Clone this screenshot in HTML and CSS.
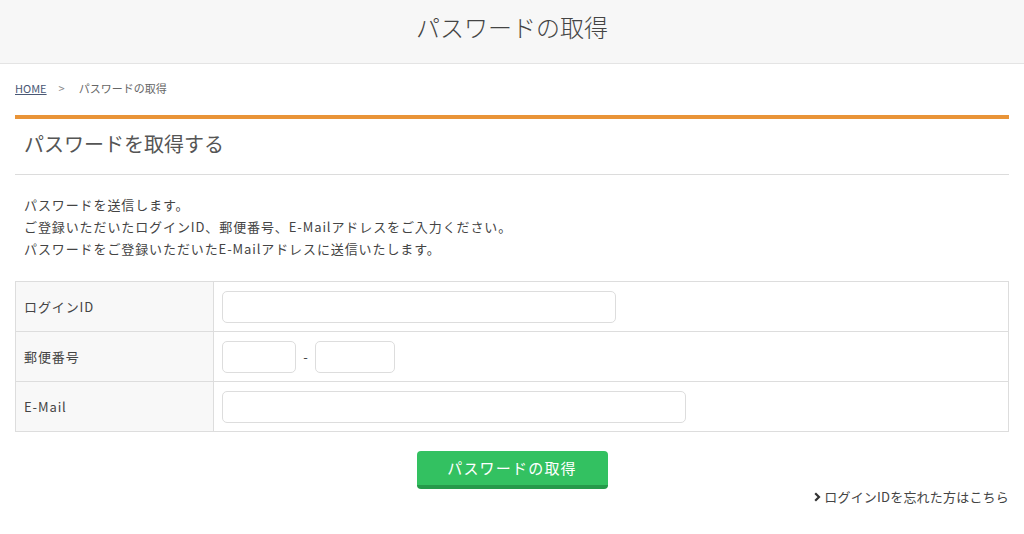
FILE: index.html
```html
<!DOCTYPE html>
<html lang="ja">
<head>
<meta charset="utf-8">
<title>パスワードの取得</title>
<link rel="stylesheet" href="styles.css">
</head>
<body>
<header class="site-header">
  <h1 class="page-title">パスワードの取得</h1>
</header>
<main class="container">
  <nav class="breadcrumb">
    <a href="#" class="crumb-link">HOME</a>
    <span class="crumb-sep">&gt;</span>
    <span class="crumb-current">パスワードの取得</span>
  </nav>
  <section class="panel">
    <h2 class="panel-title">パスワードを取得する</h2>
    <div class="intro">
      <p>パスワードを送信します。</p>
      <p>ご登録いただいたログインID、郵便番号、E-Mailアドレスをご入力ください。</p>
      <p>パスワードをご登録いただいたE-Mailアドレスに送信いたします。</p>
    </div>
    <div class="form-table">
      <div class="row">
        <div class="label">ログインID</div>
        <div class="field"><input class="input input-id" type="text"></div>
      </div>
      <div class="row">
        <div class="label">郵便番号</div>
        <div class="field">
          <input class="input input-zip1" type="text">
          <span class="dash">-</span>
          <input class="input input-zip2" type="text">
        </div>
      </div>
      <div class="row">
        <div class="label">E-Mail</div>
        <div class="field"><input class="input input-mail" type="text"></div>
      </div>
    </div>
    <div class="actions">
      <button class="btn-submit" type="button">パスワードの取得</button>
    </div>
    <div class="links">
      <a href="#" class="forgot-link"><svg class="chev" width="7" height="10" viewBox="0 0 7 10"><path d="M1.2 1.2 L5 5 L1.2 8.8" fill="none" stroke="#333" stroke-width="2.2"/></svg>ログインIDを忘れた方はこちら</a>
    </div>
  </section>
</main>
</body>
</html>
```

FILE: styles.css
```css
* { box-sizing: border-box; }
html, body { margin: 0; padding: 0; background: #fff; }
body {
  font-family: "Noto Sans CJK JP", "Noto Sans", sans-serif;
  color: #444;
}
p { margin: 0; }

.site-header {
  height: 64px;
  background: #f7f7f7;
  border-bottom: 1px solid #e4e4e4;
  display: flex;
  align-items: center;
  justify-content: center;
}
.page-title {
  margin: 0 0 10px;
  font-size: 24px;
  font-weight: 300;
  color: #444;
  line-height: 32px;
}

.container { padding: 0 15px; }

.breadcrumb {
  height: 51px;
  padding-top: 16px;
  font-size: 11px;
  line-height: 16px;
  color: #666;
  display: flex;
  gap: 0;
}
.crumb-link { color: #4a5875; text-decoration: underline; }
.crumb-sep { margin: 0 14px 0 12px; color: #888; }
.crumb-current { color: #666; }

.panel {
  border-top: 4px solid #e99438;
}
.panel-title {
  margin: 0;
  padding: 0 9px;
  height: 56px;
  line-height: 50px;
  font-size: 20px;
  font-weight: 400;
  color: #555;
  border-bottom: 1px solid #dcdcdc;
}
.intro {
  padding: 19px 9px 0;
  height: 106px;
  font-size: 13px;
  line-height: 22px;
  letter-spacing: 0.9px;
  color: #444;
}

.form-table {
  border: 1px solid #ddd;
  border-bottom: none;
}
.row {
  display: flex;
  height: 50px;
  border-bottom: 1px solid #ddd;
}
.label {
  width: 198px;
  flex: none;
  background: #f8f8f8;
  border-right: 1px solid #ddd;
  padding: 0 8px;
  display: flex;
  align-items: center;
  font-size: 13px;
  letter-spacing: 0.9px;
  color: #444;
}
.field {
  flex: 1;
  display: flex;
  align-items: center;
  padding: 0 8px;
  gap: 0;
}
.input {
  height: 32px;
  border: 1px solid #ddd;
  border-radius: 5px;
  background: #fff;
  font-size: 13px;
  padding: 0 8px;
  outline: none;
}
.input-id { width: 394px; }
.input-zip1 { width: 74px; }
.input-zip2 { width: 80px; }
.input-mail { width: 464px; }
.dash { width: 19px; text-align: center; font-size: 13px; color: #444; }

.actions {
  display: flex;
  justify-content: center;
  padding-top: 19px;
}
.btn-submit {
  width: 191px;
  height: 38px;
  border: none;
  border-bottom: 4px solid #259a4a;
  border-radius: 4px;
  background: #33c161;
  color: #fff;
  font-family: inherit;
  font-size: 15px;
  letter-spacing: 1.2px;
  line-height: 30px;
  padding: 0;
  cursor: pointer;
}
.links {
  display: flex;
  justify-content: flex-end;
  padding-top: 0;
}
.forgot-link {
  color: #444;
  text-decoration: none;
  font-size: 13px;
  line-height: 16px;
  letter-spacing: 0.2px;
  display: flex;
  align-items: center;
}
.chev { margin-right: 3px; flex: none; }
```
